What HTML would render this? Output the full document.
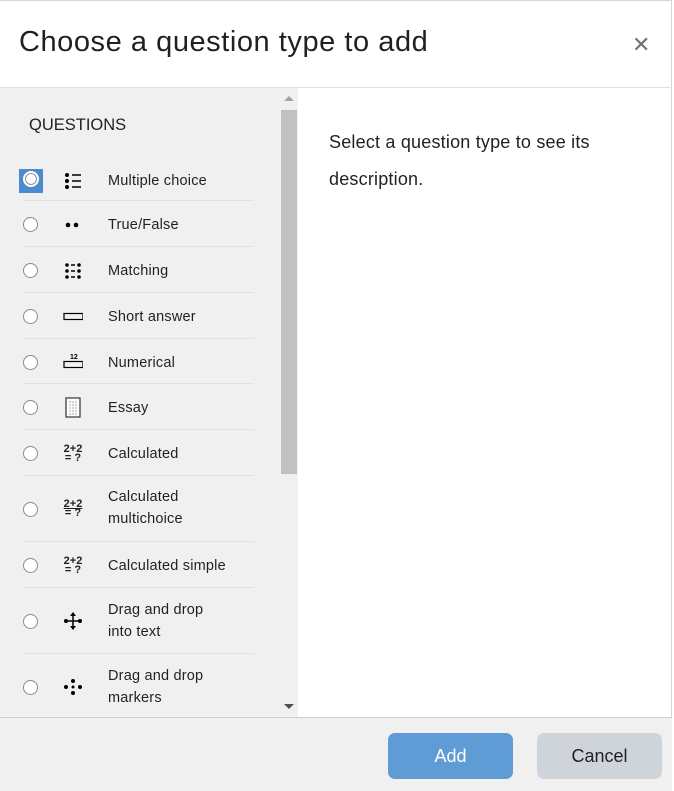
<!DOCTYPE html>
<html><head><style>
*{box-sizing:border-box;margin:0;padding:0}
body{width:674px;height:791px;background:#fff;font-family:"Liberation Sans",sans-serif;color:#1d2125;position:relative;overflow:hidden}
.frame{position:absolute;left:0;top:0;width:672px;height:791px;border-top:1px solid #d6d6d6;border-right:1px solid #d6d6d6}
.hdr{position:absolute;left:0;top:0;width:672px;height:88px;border-bottom:1px solid #dee2e6}
.hdr h1{position:absolute;left:19px;top:26px;font-size:29px;letter-spacing:0.55px;font-weight:normal;color:#1d2125}
.x{position:absolute;left:632px;top:33px;font-size:22px;color:#6a737b;line-height:24px;font-weight:300}
.left{position:absolute;left:0;top:88px;width:298px;height:630px;background:#f0f0f0;overflow:hidden}
.sb{position:absolute;left:280px;top:0;width:18px;height:630px;background:#f0f0f0}
.thumb{position:absolute;left:281px;top:22px;width:16px;height:364px;background:#c1c1c1}
.ta{position:absolute;left:284px;top:8px;width:0;height:0;border-left:5px solid transparent;border-right:5px solid transparent;border-bottom:5px solid #a3a3a3}
.ba{position:absolute;left:284px;top:616px;width:0;height:0;border-left:5px solid transparent;border-right:5px solid transparent;border-top:5px solid #505050}
.qh{position:absolute;left:29px;top:28px;font-size:16.5px;color:#1d2125}
.row{position:absolute;left:23px;width:231px;border-bottom:1px solid #dee2e6;font-size:14.5px;line-height:22px;letter-spacing:0.2px}
.row .r{position:absolute;left:0;width:15px;height:15px;border:1px solid #8a8a8a;border-radius:50%;background:#fff}
.row .ic{position:absolute;left:40px;width:20px;font-size:11px;font-weight:bold;text-align:center;line-height:9px;letter-spacing:0}
.row .t{position:absolute;left:85px}
.right{position:absolute;left:329px;top:124px;font-size:18px;line-height:37px;color:#1d2125;letter-spacing:0.2px}
.ftr{position:absolute;left:0;top:717px;width:672px;height:74px;background:#f0f0f0;border-top:1px solid #cfcfcf}
.btn{position:absolute;top:15px;width:125px;height:46px;border-radius:7px;font-size:18px;text-align:center;line-height:46px}
</style></head><body>
<div class="frame"></div>
<div class="hdr"><h1>Choose a question type to add</h1><div class="x">✕</div></div>
<div class="left">
<div class="qh">QUESTIONS</div>
<div class="sb"></div><div class="thumb"></div><div class="ta"></div><div class="ba"></div>

<div class="row" style="top:68px;height:45px">
<div style="position:absolute;left:-4px;top:13px;width:24px;height:24px;background:#4c8bcd"></div>
<div class="r" style="top:15px;left:0;width:16px;height:16px;border:2px solid #fff;background:#fff;box-shadow:0 0 0 1px #8a8a8a inset"></div>
<svg class="ic" style="top:16px" width="20" height="18"><circle cx="4" cy="3" r="2"/><circle cx="4" cy="9" r="2"/><circle cx="4" cy="15" r="2"/><path d="M9 3h9M9 9h9M9 15h9" stroke="#000" stroke-width="1.4"/></svg>
<div class="t" style="top:14px">Multiple choice</div></div>

<div class="row" style="top:113px;height:46px"><div class="r" style="top:16px"></div>
<svg class="ic" style="top:19px" width="20" height="10"><circle cx="5" cy="5" r="2.3"/><circle cx="13" cy="5" r="2.3"/></svg>
<div class="t" style="top:13px">True/False</div></div>

<div class="row" style="top:159px;height:46px"><div class="r" style="top:16px"></div>
<svg class="ic" style="top:15px" width="20" height="18"><g><circle cx="4" cy="3" r="1.8"/><circle cx="4" cy="9" r="1.8"/><circle cx="4" cy="15" r="1.8"/><circle cx="16" cy="3" r="1.8"/><circle cx="16" cy="9" r="1.8"/><circle cx="16" cy="15" r="1.8"/></g><path d="M8 3h4M8 9h4M8 15h4" stroke="#000" stroke-width="1.6"/></svg>
<div class="t" style="top:13px">Matching</div></div>

<div class="row" style="top:205px;height:46px"><div class="r" style="top:16px"></div>
<svg class="ic" style="top:19px" width="22" height="10"><rect x="1" y="1.5" width="19" height="6" fill="none" stroke="#000" stroke-width="1.2"/></svg>
<div class="t" style="top:13px">Short answer</div></div>

<div class="row" style="top:251px;height:45px"><div class="r" style="top:16px"></div>
<svg class="ic" style="top:13px" width="22" height="18"><text x="7" y="7" font-size="7" font-family="Liberation Sans" font-weight="bold">12</text><rect x="1" y="9.5" width="19" height="6" fill="none" stroke="#000" stroke-width="1.2"/></svg>
<div class="t" style="top:13px">Numerical</div></div>

<div class="row" style="top:296px;height:46px"><div class="r" style="top:16px"></div>
<svg class="ic" style="top:13px" width="20" height="22"><rect x="3" y="1" width="14" height="19" fill="#fff" stroke="#333" stroke-width="1.2"/><path d="M6 5h8M6 8h8M6 11h8M6 14h8M6 17h8" stroke="#aaa" stroke-width="1" stroke-dasharray="2 1"/></svg>
<div class="t" style="top:13px">Essay</div></div>

<div class="row" style="top:342px;height:46px"><div class="r" style="top:16px"></div>
<div class="ic" style="top:15px">2+2<br>= ?</div>
<div class="t" style="top:13px">Calculated</div></div>

<div class="row" style="top:388px;height:66px"><div class="r" style="top:26px"></div>
<div class="ic" style="top:24px;text-decoration:underline">2+2</div><div class="ic" style="top:33px">= ?</div>
<div class="t" style="top:10px">Calculated<br>multichoice</div></div>

<div class="row" style="top:454px;height:46px"><div class="r" style="top:16px"></div>
<div class="ic" style="top:15px">2+2<br>= ?</div>
<div class="t" style="top:13px">Calculated simple</div></div>

<div class="row" style="top:500px;height:66px"><div class="r" style="top:26px"></div>
<svg class="ic" style="top:23px" width="20" height="20"><path d="M10 2v16M3 10h14" stroke="#000" stroke-width="1.5"/><path d="M10 1l-3 4h6zM10 19l-3-4h6z"/><circle cx="3" cy="10" r="2"/><circle cx="17" cy="10" r="2"/></svg>
<div class="t" style="top:11px">Drag and drop<br>into text</div></div>

<div class="row" style="top:566px;height:66px;border:none"><div class="r" style="top:26px"></div>
<svg class="ic" style="top:23px" width="20" height="20"><circle cx="10" cy="4" r="2"/><circle cx="10" cy="16" r="2"/><circle cx="3" cy="10" r="2"/><circle cx="17" cy="10" r="2"/><circle cx="10" cy="10" r="1.5"/></svg>
<div class="t" style="top:11px">Drag and drop<br>markers</div></div>
</div>
<div class="right">Select a question type to see its<br>description.</div>
<div class="ftr">
<div class="btn" style="left:388px;background:#5f9bd4;color:#fff">Add</div>
<div class="btn" style="left:537px;background:#ced4da;color:#1d2125">Cancel</div>
</div>
</body></html>
